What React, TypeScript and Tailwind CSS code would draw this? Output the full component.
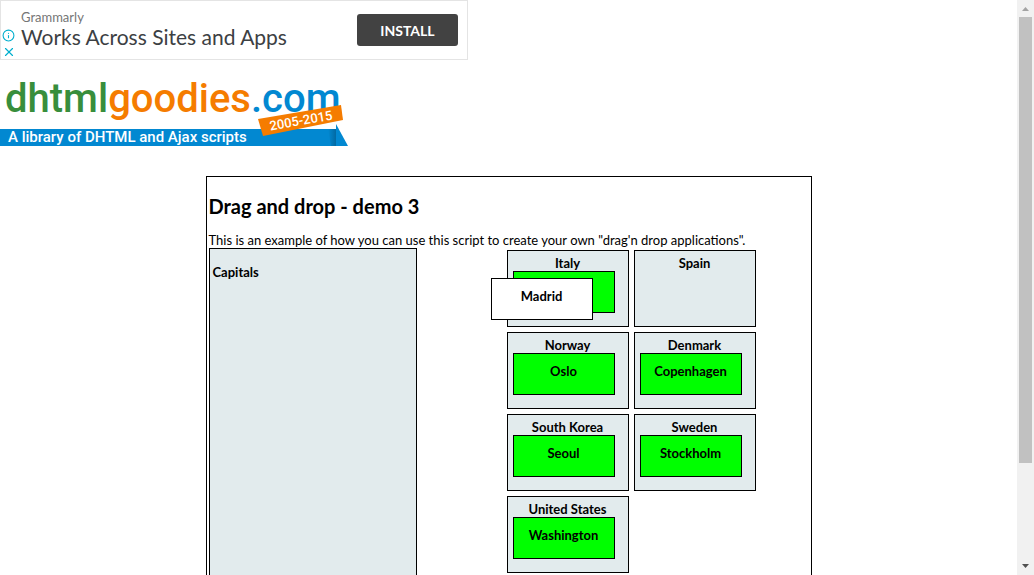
import { Info, X } from "lucide-react";

type Place = { country: string; capital?: string; dragging?: string };

const places: Place[] = [
  { country: "Italy", capital: "", dragging: "Madrid" },
  { country: "Spain" },
  { country: "Norway", capital: "Oslo" },
  { country: "Denmark", capital: "Copenhagen" },
  { country: "South Korea", capital: "Seoul" },
  { country: "Sweden", capital: "Stockholm" },
  { country: "United States", capital: "Washington" },
];

function AdBanner() {
  return (
    <aside className="flex h-[60px] w-full max-w-[468px] items-center border border-[#e4e4e4] bg-white pr-[9px] pl-px font-['Lato',sans-serif]">
      <div className="flex w-[19px] flex-col gap-[3px] pt-7 text-[#00aecd]">
        <a href="#about" aria-label="About this ad">
          <Info className="size-[13px]" strokeWidth={2} />
        </a>
        <button type="button" aria-label="Close ad">
          <X className="size-[14px]" strokeWidth={2} />
        </button>
      </div>
      <div className="flex-1 pb-[2px]">
        <p className="text-[13px] leading-4 text-[#757575]">Grammarly</p>
        <p className="text-[21px] leading-6 text-[#3c4043]">Works Across Sites and Apps</p>
      </div>
      <button
        type="button"
        className="h-8 w-[101px] rounded-[3px] bg-[#424242] text-[14px] font-bold text-white"
      >
        INSTALL
      </button>
    </aside>
  );
}

function Logo() {
  return (
    <a href="#home" className="relative mt-4 block h-[76px] w-[350px] font-['Roboto',sans-serif]">
      <span className="block h-[53px] pl-[5px] text-[40px] leading-[46px] font-medium text-[#388e3c]">
        dhtml<span className="text-[#f57c00]">goodies</span>
        <span className="text-[#0288d1]">.com</span>
      </span>
      <span className="block h-[17px] w-[336px] bg-[#0288d1] pl-2 text-[15px] leading-[17px] font-medium text-white">
        A library of DHTML and Ajax scripts
      </span>
      <svg
        className="absolute right-0 bottom-0 h-[52px] w-[100px]"
        viewBox="250 100 100 52"
        aria-hidden="true"
      >
        <defs>
          <linearGradient id="fold" x1="0" x2="1" y1="0" y2="0">
            <stop offset="0" stopColor="#0288d1" />
            <stop offset="1" stopColor="#02659c" />
          </linearGradient>
        </defs>
        <path d="M328 129H337V146H331Z" fill="url(#fold)" />
        <path d="M336 124V146H348Z" fill="#0288d1" />
        <path d="M258 119L341 105L343 120L263 136Z" fill="#f57c00" />
        <text
          x="301"
          y="125"
          textAnchor="middle"
          transform="rotate(-10 301 121)"
          fontSize="13"
          fontWeight="500"
          fill="#fff"
        >
          2005-2015
        </text>
      </svg>
    </a>
  );
}

function CapitalBox({ name }: { name: string }) {
  return (
    <div className="h-[42px] w-[102px] cursor-move border border-black bg-[#00ff00] pt-2 text-center leading-[18px]">
      {name}
    </div>
  );
}

function CountryBox({ country, capital, dragging }: Place) {
  return (
    <div className="relative h-[77px] w-[122px] border border-black bg-[#e2ebed] px-[5px] pt-1 font-bold">
      <div className="h-4 text-center leading-4">{country}</div>
      {capital !== undefined && <CapitalBox name={capital} />}
      {dragging && (
        <div className="absolute top-[27px] left-[-17px] h-[42px] w-[102px] cursor-move border border-black bg-white pt-2 text-center leading-[18px]">
          {dragging}
        </div>
      )}
    </div>
  );
}

function ScrollBar() {
  return (
    <div className="flex w-[17px] shrink-0 flex-col items-center bg-[#f1f1f1]" aria-hidden="true">
      <svg className="h-[17px] w-[17px] shrink-0" viewBox="0 0 17 17">
        <path d="M5 11L8.500 7L12 11Z" fill="#a3a3a3" />
      </svg>
      <div className="h-[77.5%] w-[13px] bg-[#c1c1c1]" />
      <div className="flex-1" />
      <svg className="h-[17px] w-[17px] shrink-0" viewBox="0 0 17 17">
        <path d="M5 6L8.500 10L12 6Z" fill="#505050" />
      </svg>
    </div>
  );
}

export default function App() {
  return (
    <div className="flex h-screen overflow-hidden bg-white text-black">
      <div className="min-w-0 flex-1 overflow-hidden">
        <AdBanner />
        <Logo />
        <main className="mx-auto mt-6 w-full max-w-[606px] border border-black px-[2px] pt-[17px] pb-4 font-['Lato',sans-serif] text-[13px]">
          <h1 className="text-[20px] leading-6 font-bold">Drag and drop - demo 3</h1>
          <p className="mt-[14px] leading-4">
            This is an example of how you can use this script to create your own "drag'n drop
            applications".
          </p>
          <div className="flex justify-between">
            <section className="h-[400px] w-[208px] border border-black bg-[#e2ebed] px-[3px] pt-[14px]">
              <h2 className="leading-[18px] font-bold">Capitals</h2>
            </section>
            <section className="mt-[2px] mr-[46px] flex w-[256px] flex-wrap content-start gap-[5px]">
              {places.map((place) => (
                <CountryBox key={place.country} {...place} />
              ))}
            </section>
          </div>
        </main>
      </div>
      <ScrollBar />
    </div>
  );
}
